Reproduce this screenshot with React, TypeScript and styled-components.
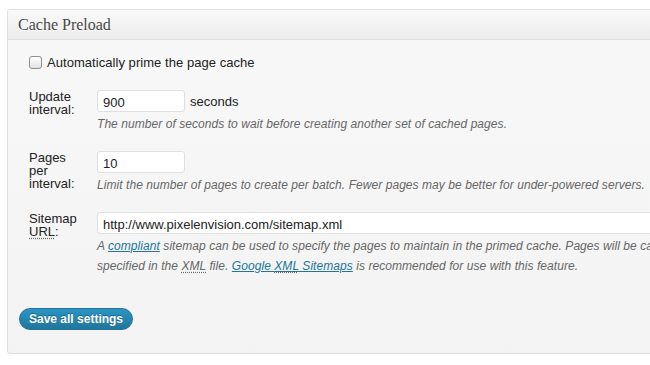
import React from 'react'
import styled, { createGlobalStyle } from 'styled-components'

const GlobalStyle = createGlobalStyle`
  html, body {
    margin: 0;
    padding: 0;
    background: #fff;
    overflow: hidden;
  }
  body {
    font-family: "Liberation Sans", Arial, sans-serif;
    font-size: 13px;
    color: #333;
  }
`

const Page = styled.div`
  padding: 9px 0 0 7px;
  width: 1000px;
`

const Panel = styled.div`
  width: 900px;
  border: 1px solid #dfdfdf;
  border-radius: 3px;
  background: linear-gradient(to bottom, #f8f8f8, #f3f3f3);
  box-shadow: 0 1px 0 #fff inset;
`

const PanelHeader = styled.div`
  height: 29px;
  display: flex;
  align-items: center;
  padding-left: 10px;
  border-bottom: 1px solid #dfdfdf;
  background: linear-gradient(to bottom, #f9f9f9, #ececec);
  border-radius: 3px 3px 0 0;
`

const PanelTitle = styled.h3`
  margin: 0;
  font-family: "Liberation Serif", "Times New Roman", serif;
  font-weight: normal;
  font-size: 16px;
  color: #464646;
  text-shadow: 0 1px 0 #fff;
`

const PanelBody = styled.div`
  padding: 14px 11px 23px;
`

const CheckRow = styled.label`
  display: flex;
  align-items: center;
  gap: 5px;
  height: 16px;
  padding-left: 10px;
  color: #222;
  font-size: 13px;
  letter-spacing: 0.05px;
`

const Checkbox = styled.input`
  appearance: none;
  margin: 0;
  width: 13px;
  height: 13px;
  border: 1px solid #8e8e8e;
  border-radius: 3px;
  background: linear-gradient(to bottom, #fff, #e3e3e3);
  box-sizing: border-box;
`

const SettingsTable = styled.div`
  display: flex;
  flex-direction: column;
  gap: 17px;
  margin-top: 20px;
  padding-left: 10px;
`

const SettingRow = styled.div`
  display: grid;
  grid-template-columns: 58px 1fr;
  column-gap: 10px;
  align-items: start;
`

const Label = styled.div`
  font-size: 13px;
  line-height: 13px;
  color: #222;
`

const Field = styled.div`
  display: flex;
  flex-direction: column;
`

const InputLine = styled.div`
  display: flex;
  align-items: center;
  gap: 5px;
  color: #222;
`

const TextInput = styled.input<{ $width: number }>`
  width: ${({ $width }) => $width}px;
  height: 22px;
  box-sizing: border-box;
  margin: 0;
  padding: 2px 5px 0;
  border: 1px solid #dfdfdf;
  border-radius: 3px;
  background: #fff;
  font-family: "Liberation Sans", Arial, sans-serif;
  font-size: 13px;
  color: #222;
  outline: none;
`

const Description = styled.div`
  margin-top: 2px;
  font-size: 12px;
  line-height: 20px;
  font-style: italic;
  color: #666;
  white-space: nowrap;
  letter-spacing: 0.06px;
`

const Link = styled.a`
  color: #21759b;
  text-decoration: underline;
`

const Abbr = styled.abbr`
  text-decoration: underline dotted #666;
  text-underline-offset: 2px;
`

const SaveButton = styled.button`
  margin-top: 32px;
  height: 22px;
  padding: 0 9px;
  border: 1px solid #21759b;
  border-radius: 11px;
  background: linear-gradient(to bottom, #2a95c5, #21759b);
  color: #fff;
  font-family: "Liberation Sans", Arial, sans-serif;
  font-weight: bold;
  font-size: 12px;
  text-shadow: 0 -1px 0 rgba(0, 0, 0, 0.3);
  cursor: pointer;
`

export default function App() {
  return (
    <Page>
      <GlobalStyle />
      <Panel>
        <PanelHeader>
          <PanelTitle>Cache Preload</PanelTitle>
        </PanelHeader>
        <PanelBody>
          <CheckRow>
            <Checkbox type="checkbox" />
            Automatically prime the page cache
          </CheckRow>
          <SettingsTable>
            <SettingRow>
              <Label>Update interval:</Label>
              <Field>
                <InputLine>
                  <TextInput $width={88} defaultValue="900" />
                  seconds
                </InputLine>
                <Description>The number of seconds to wait before creating another set of cached pages.</Description>
              </Field>
            </SettingRow>
            <SettingRow>
              <Label>Pages per interval:</Label>
              <Field>
                <InputLine>
                  <TextInput $width={88} defaultValue="10" />
                </InputLine>
                <Description>
                  Limit the number of pages to create per batch. Fewer pages may be better for under-powered servers.
                </Description>
              </Field>
            </SettingRow>
            <SettingRow>
              <Label>
                Sitemap <Abbr title="Uniform Resource Locator">URL</Abbr>:
              </Label>
              <Field>
                <InputLine>
                  <TextInput $width={700} defaultValue="http://www.pixelenvision.com/sitemap.xml" />
                </InputLine>
                <Description>
                  A <Link href="#">compliant</Link> sitemap can be used to specify the pages to maintain in the primed
                  cache. Pages will be cached according to the priorities
                  <br />
                  specified in the <Abbr title="Extensible Markup Language">XML</Abbr> file.{' '}
                  <Link href="#">
                    Google <Abbr title="Extensible Markup Language">XML</Abbr> Sitemaps
                  </Link>{' '}
                  is recommended for use with this feature.
                </Description>
              </Field>
            </SettingRow>
          </SettingsTable>
          <SaveButton>Save all settings</SaveButton>
        </PanelBody>
      </Panel>
    </Page>
  )
}
